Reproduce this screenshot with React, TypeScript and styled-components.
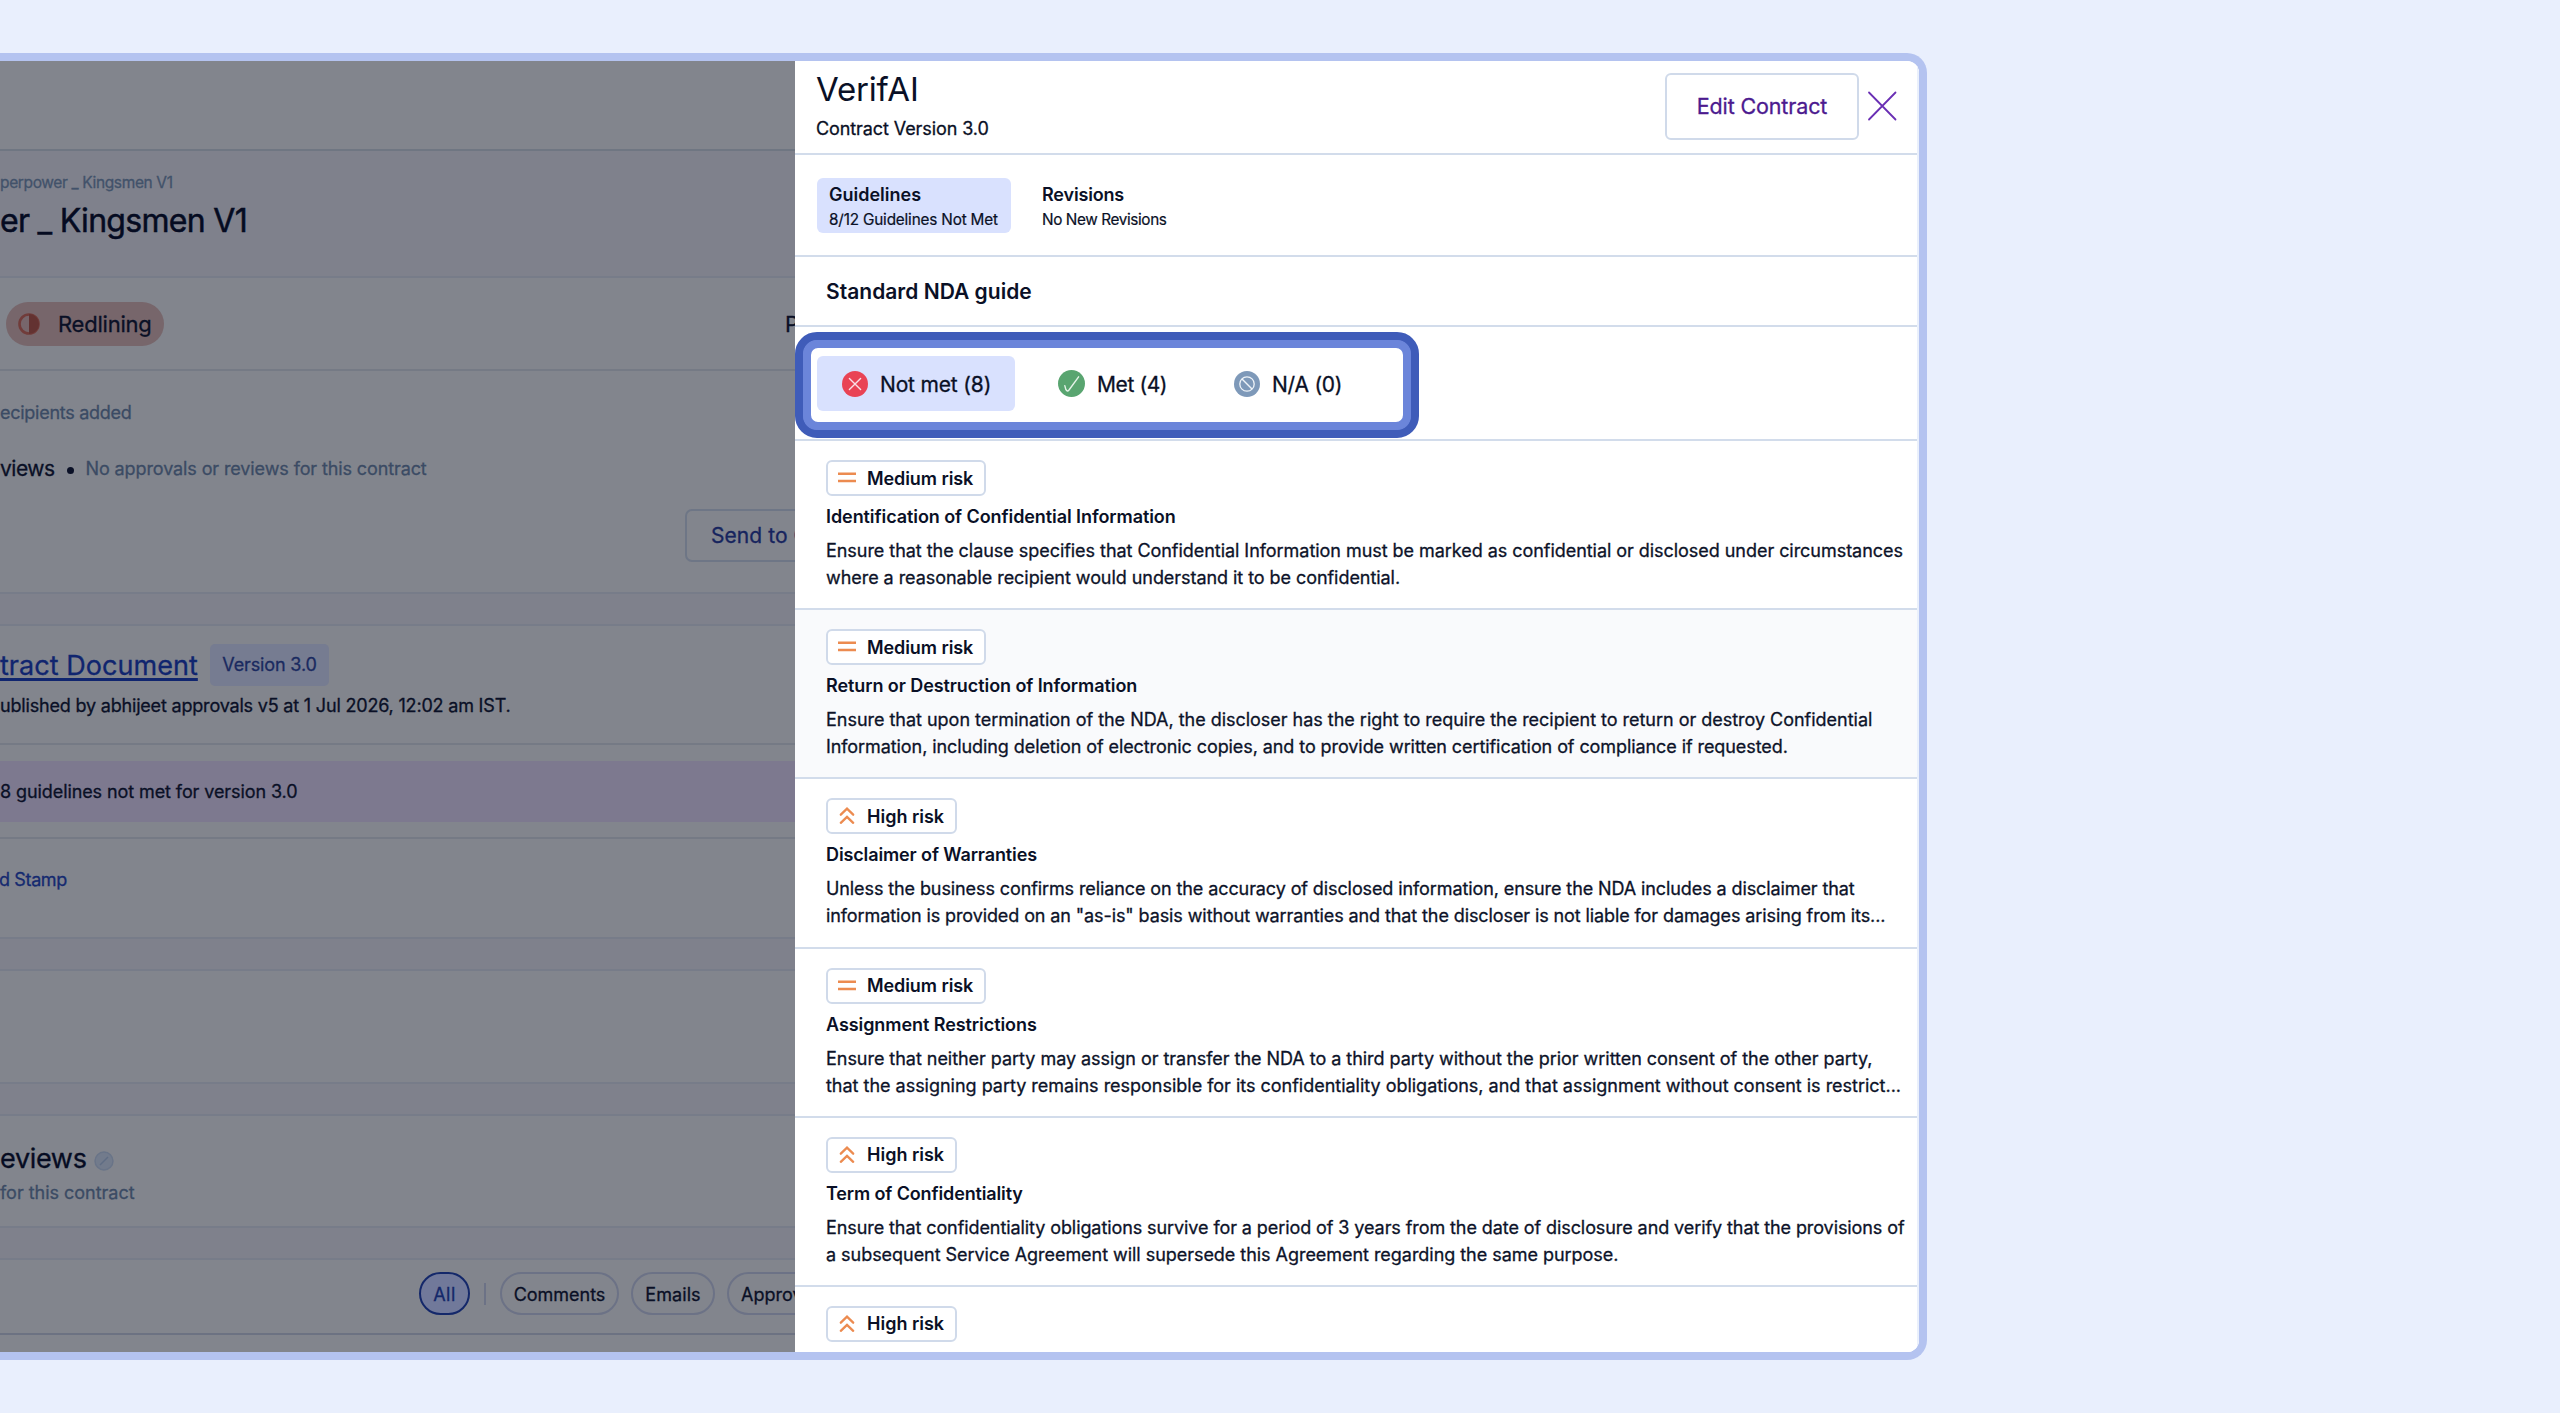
import React from "react";
import styled, { createGlobalStyle, css } from "styled-components";

const GlobalStyle = createGlobalStyle`
  *, *::before, *::after { box-sizing: border-box; }
  body {
    margin: 0;
    background: #e9effd;
    font-family: Inter, "Liberation Sans", sans-serif;
    font-weight: 400;
    color: #0a1026;
    overflow: hidden;
  }
`;

type Spacing = { $ls?: number };
const tracking = css<Spacing>`
  letter-spacing: ${(p) => p.$ls ?? 0}px;
  white-space: nowrap;
`;

/* Thickens regular text to a grade between 400 and 500. */
const grade = css`-webkit-text-stroke: 0.3px currentColor;`;

/* ---------- Frame ---------- */

const Page = styled.main`
  width: 2560px;
  height: 1413px;
  padding-top: 53px;
  background: #e9effd;
`;

const Frame = styled.div`
  display: flex;
  width: 1927px;
  height: 1307px;
  border: 8px solid #b4c3f0;
  border-left: 0;
  border-radius: 0 20px 20px 0;
  overflow: hidden;
  background: #fff;
`;

/* ---------- Dimmed contract page ---------- */

const Dimmed = styled.section`
  flex: none;
  width: 795px;
  display: flex;
  flex-direction: column;
  overflow: hidden;
  background: #82858d;
  ${grade}
`;

const Block = styled.div<{ $h: number; $band?: boolean; $line?: string; $pad?: number }>`
  flex: none;
  display: flex;
  flex-direction: column;
  align-items: flex-start;
  height: ${(p) => p.$h}px;
  padding-top: ${(p) => p.$pad ?? 0}px;
  background: ${(p) => (p.$band ? "#7f818c" : "#82858d")};
  border-bottom: 2px solid ${(p) => p.$line ?? "#777c89"};
`;

const Breadcrumb = styled.div<Spacing>`
  font-size: 15.5px;
  line-height: 24px;
  color: #42526a;
  ${tracking}
`;

const ContractTitle = styled.h1<Spacing>`
  margin: 6px 0 0;
  font-size: 32px;
  line-height: 40px;
  font-weight: 400;
  color: #050b21;
  -webkit-text-stroke: 0.5px currentColor;
  ${tracking}
`;

const StatusRow = styled.div`
  flex: none;
  display: flex;
  align-items: center;
  height: 93px;
  padding-left: 6px;
  border-bottom: 2px solid #757a85;
`;

const StatusPill = styled.div`
  flex: none;
  display: flex;
  align-items: center;
  width: 158px;
  height: 44px;
  padding-left: 12px;
  border-radius: 22px;
  background: #77666b;
`;

const StatusText = styled.span<Spacing>`
  margin-left: 18px;
  font-size: 22px;
  line-height: 30px;
  ${tracking}
`;

const Clipped = styled.span`
  margin-left: 621px;
  font-size: 22px;
  line-height: 30px;
  white-space: nowrap;
`;

const Muted = styled.p<Spacing>`
  margin: 0;
  font-size: 18px;
  line-height: 28px;
  color: #3b4b64;
  ${tracking}
`;

const Body = styled.p<Spacing>`
  margin: 0;
  font-size: 18px;
  line-height: 28px;
  ${tracking}
`;

const PublishedNote = styled(Body)`
  margin-top: 6px;
`;

const ReviewLine = styled.div`
  display: flex;
  align-items: center;
  height: 30px;
  margin: 27px 0 25px;
`;

const ReviewLabel = styled.span<Spacing>`
  font-size: 21px;
  line-height: 30px;
  ${tracking}
`;

const Bullet = styled.i`
  width: 7px;
  height: 7px;
  margin: 2px 12px 0 12px;
  border-radius: 50%;
  background: #0a1026;
`;

const SendButton = styled.button<Spacing>`
  align-self: flex-start;
  width: 200px;
  height: 53px;
  margin-left: 685px;
  padding: 0 0 0 24px;
  border: 2px solid #6e7686;
  border-radius: 7px;
  background: transparent;
  font: 400 21px/30px Inter, sans-serif;
  text-align: left;
  color: #16245e;
  ${tracking}
`;

const DocRow = styled.div`
  display: flex;
  align-items: center;
  height: 42px;
`;

const DocLink = styled.a<Spacing>`
  width: 198px;
  font-size: 27px;
  line-height: 33px;
  color: #10256f;
  text-decoration: underline;
  text-decoration-thickness: 2.5px;
  text-underline-offset: 3px;
  text-decoration-skip-ink: none;
  ${tracking}
`;

const VersionBadge = styled.span<Spacing>`
  width: 119px;
  height: 42px;
  margin-left: 12px;
  border-radius: 5px;
  background: #767c91;
  font-size: 18px;
  line-height: 41px;
  text-align: center;
  color: #1a2a60;
  ${tracking}
`;

const Notice = styled.div`
  flex: none;
  display: flex;
  align-items: center;
  height: 61px;
  margin-top: 16px;
  background: #7d798f;
`;

const StampBlock = styled.div`
  flex: none;
  display: flex;
  align-items: center;
  height: 102px;
  margin-top: 15px;
  padding-bottom: 16px;
  border-top: 2px solid #757a85;
  border-bottom: 2px solid #777c89;
`;

const StampLink = styled.a<Spacing>`
  margin-left: -1px;
  font-size: 18px;
  line-height: 28px;
  color: #152a70;
  ${tracking}
`;

const HeadingRow = styled.div`
  display: flex;
  align-items: center;
  gap: 7px;
  height: 36px;
  svg { margin-top: 3px; }
`;

const SectionHeading = styled.h2<Spacing>`
  margin: 0;
  font-size: 27px;
  line-height: 36px;
  font-weight: 400;
  color: #060c22;
  ${tracking}
`;

const SectionNote = styled(Muted)`
  margin-top: 2px;
`;

const ChipRow = styled.div`
  flex: none;
  display: flex;
  align-items: center;
  height: 75px;
  padding: 0 0 6px 419px;
  border-bottom: 2px solid #6c7282;
`;

const Chip = styled.span<Spacing & { $w: number; $active?: boolean; $gap?: number }>`
  flex: none;
  width: ${(p) => p.$w}px;
  height: 43px;
  margin-right: ${(p) => p.$gap ?? 12}px;
  border: 2px solid ${(p) => (p.$active ? "#14286a" : "#6c7286")};
  border-radius: 22px;
  background: ${(p) => (p.$active ? "#71799a" : "transparent")};
  font-size: 18px;
  line-height: 41px;
  text-align: center;
  color: ${(p) => (p.$active ? "#14286a" : "#0a1026")};
  ${tracking}
`;

const OpenChip = styled(Chip)`
  padding-left: 12px;
  text-align: left;
`;

const ChipDivider = styled.i`
  flex: none;
  width: 2px;
  height: 22px;
  margin-right: 14px;
  background: #6c7286;
`;

/* ---------- VerifAI panel ---------- */

const Panel = styled.section`
  flex: 1;
  min-width: 0;
  display: flex;
  flex-direction: column;
  overflow: hidden;
  border-right: 2px solid #eaf0fc;
  background: #fff;
`;

const rule = css`border-bottom: 2px solid #d2dceb;`;

const PanelHeader = styled.header`
  flex: none;
  display: flex;
  height: 94px;
  padding: 8px 20px 0 21px;
  ${rule}
`;

const TitleGroup = styled.div`
  flex: 1;
  display: flex;
  flex-direction: column;
`;

const PanelTitle = styled.h2<Spacing>`
  margin: 0;
  font-size: 33px;
  line-height: 41px;
  font-weight: 400;
  ${tracking}
`;

const PanelSub = styled.p<Spacing>`
  margin: 5px 0 0;
  font-size: 18px;
  line-height: 28px;
  ${grade}
  ${tracking}
`;

const EditButton = styled.button<Spacing>`
  width: 194px;
  height: 67px;
  margin: 4px 8px 0 0;
  padding: 0 0 2px;
  border: 2px solid #d0daea;
  border-radius: 6px;
  background: #fff;
  font: 400 21.5px/30px Inter, sans-serif;
  color: #4c1a8f;
  ${grade}
  ${tracking}
`;

const CloseButton = styled.button`
  display: flex;
  width: 30px;
  height: 30px;
  margin-top: 22px;
  padding: 0;
  border: 0;
  background: none;
`;

const Tabs = styled.nav`
  flex: none;
  display: flex;
  gap: 19px;
  height: 102px;
  padding: 23px 0 0 22px;
  ${rule}
`;

const Tab = styled.div<{ $active?: boolean }>`
  width: 194px;
  height: 55px;
  padding: 4px 0 0 12px;
  border-radius: 6px;
  background: ${(p) => (p.$active ? "#d9e1fe" : "transparent")};
`;

const TabName = styled.div<Spacing>`
  font-size: 18px;
  line-height: 26px;
  font-weight: 600;
  ${tracking}
`;

const TabInfo = styled.div<Spacing>`
  font-size: 15.3px;
  line-height: 23px;
  -webkit-text-stroke: 0.2px currentColor;
  ${tracking}
`;

const GuideTitle = styled.h3<Spacing>`
  flex: none;
  height: 70px;
  margin: 0;
  padding: 0 0 0 31px;
  font-size: 21px;
  line-height: 70px;
  font-weight: 600;
  ${rule}
  ${tracking}
`;

const FilterRow = styled.div`
  flex: none;
  height: 114px;
  padding-top: 5px;
  ${rule}
`;

const RingOuter = styled.div`
  width: 624px;
  height: 106px;
  border: 8px solid #3f5cb9;
  border-radius: 22px;
  background: #6b85da;
`;

const RingInner = styled.div`
  display: flex;
  height: 90px;
  padding: 8px 6px 0;
  border: 8px solid #6b85da;
  border-radius: 15px;
  background: #fff;
`;

const Filter = styled.button<Spacing & { $w: number; $pl: number; $active?: boolean }>`
  display: flex;
  align-items: center;
  width: ${(p) => p.$w}px;
  height: 55px;
  padding: 0 0 0 ${(p) => p.$pl}px;
  border: 0;
  border-radius: 6px;
  background: ${(p) => (p.$active ? "#d9e1fe" : "transparent")};
  font: 400 21px/30px Inter, sans-serif;
  color: #0a1026;
  ${grade}
  ${tracking}
  svg { flex: none; }
`;

const FilterLabel = styled.span`
  padding: 2px 0 0 12px;
`;

const Card = styled.article<{ $tinted?: boolean }>`
  flex: none;
  height: 169.2px;
  padding: 19px 0 0 31px;
  background: ${(p) => (p.$tinted ? "#f9fafc" : "#fff")};
  ${rule}
`;

const RiskBadge = styled.div<Spacing & { $high: boolean }>`
  display: flex;
  align-items: center;
  gap: 10px;
  width: ${(p) => (p.$high ? 131 : 160)}px;
  height: 36px;
  padding-left: 9px;
  border: 2px solid #d0daea;
  border-radius: 6px;
  background: #fff;
  font-size: 18px;
  font-weight: 600;
  ${tracking}
  svg { flex: none; }
`;

const CardTitle = styled.h4<Spacing>`
  margin: 7px 0 0;
  font-size: 18px;
  line-height: 28px;
  font-weight: 600;
  ${tracking}
`;

const CardText = styled.p`
  margin: 6px 0 0;
  font-size: 18px;
  line-height: 27px;
  color: #0d1329;
  ${grade}
`;

const Line = styled.span<Spacing>`
  display: block;
  ${tracking}
`;

/* ---------- Icons ---------- */

const HalfCircle = () => (
  <svg width="22" height="22" viewBox="0 0 22 22">
    <circle cx="11" cy="11" r="9.5" fill="none" stroke="#713c3a" strokeWidth="2.6" />
    <path d="M11 1a10 10 0 0 1 0 20z" fill="#633231" />
  </svg>
);

const PendingIcon = () => (
  <svg width="20" height="20" viewBox="0 0 20 20">
    <circle cx="10" cy="10" r="9" fill="#727b8c" stroke="#697488" strokeWidth="1.4" />
    <path d="M6 14 14 6" stroke="#5f6d83" strokeWidth="1.4" />
  </svg>
);

const CloseIcon = () => (
  <svg width="30" height="30" viewBox="0 0 30 30">
    <path d="M2 1.5 28.5 28.5M28.5 1.5 2 28.5" stroke="#6a2fb4" strokeWidth="1.8" strokeLinecap="round" />
  </svg>
);

const NotMetIcon = () => (
  <svg width="26" height="26" viewBox="0 0 26 26">
    <circle cx="13" cy="13" r="13" fill="#e94355" />
    <path d="M7.4 7.4 18.6 18.6M18.6 7.4 7.4 18.6" stroke="#f9dfe6" strokeWidth="1.4" strokeLinecap="round" />
  </svg>
);

const MetIcon = () => (
  <svg width="27" height="27" viewBox="0 0 27 27">
    <circle cx="13.5" cy="13.5" r="13.5" fill="#59a570" />
    <path d="M6.8 15.6 7.8 19.4Q9.2 22.2 11 20L20.6 6.8" fill="none" stroke="#e4f2e8" strokeWidth="1.4" strokeLinecap="round" strokeLinejoin="round" />
  </svg>
);

const NaIcon = () => (
  <svg width="26" height="26" viewBox="0 0 26 26">
    <circle cx="13" cy="13" r="13" fill="#7e99b9" />
    <circle cx="13" cy="13" r="7.2" fill="none" stroke="#eef3f8" strokeWidth="1.3" />
    <path d="M8 8 18 18" stroke="#eef3f8" strokeWidth="1.4" />
  </svg>
);

const MediumIcon = () => (
  <svg width="20" height="20" viewBox="0 0 20 20">
    <path d="M1 5.8H19M1 13H19" stroke="#ec8b50" strokeWidth="2.4" />
  </svg>
);

const HighIcon = () => (
  <svg width="20" height="20" viewBox="0 0 20 20">
    <path d="M3.8 8.7 10 2.7 16.2 8.7M3.8 16.8 10 10.8 16.2 16.8" fill="none" stroke="#ec8b50" strokeWidth="2.3" strokeLinecap="round" />
  </svg>
);

/* ---------- Data ---------- */

type Guideline = {
  high?: boolean;
  tinted?: boolean;
  title: string;
  ls: number;
  lines: [string, number][];
};

const guidelines: Guideline[] = [
  {
    title: "Identification of Confidential Information",
    ls: -0.075,
    lines: [
      ["Ensure that the clause specifies that Confidential Information must be marked as confidential or disclosed under circumstances", -0.044],
      ["where a reasonable recipient would understand it to be confidential.", -0.055],
    ],
  },
  {
    tinted: true,
    title: "Return or Destruction of Information",
    ls: -0.08,
    lines: [
      ["Ensure that upon termination of the NDA, the discloser has the right to require the recipient to return or destroy Confidential", -0.02],
      ["Information, including deletion of electronic copies, and to provide written certification of compliance if requested.", -0.08],
    ],
  },
  {
    high: true,
    title: "Disclaimer of Warranties",
    ls: -0.12,
    lines: [
      ["Unless the business confirms reliance on the accuracy of disclosed information, ensure the NDA includes a disclaimer that", -0.1],
      ['information is provided on an "as-is" basis without warranties and that the discloser is not liable for damages arising from its...', -0.1],
    ],
  },
  {
    title: "Assignment Restrictions",
    ls: -0.07,
    lines: [
      ["Ensure that neither party may assign or transfer the NDA to a third party without the prior written consent of the other party,", -0.037],
      ["that the assigning party remains responsible for its confidentiality obligations, and that assignment without consent is restrict...", -0.014],
    ],
  },
  {
    high: true,
    title: "Term of Confidentiality",
    ls: -0.13,
    lines: [
      ["Ensure that confidentiality obligations survive for a period of 3 years from the date of disclosure and verify that the provisions of", -0.085],
      ["a subsequent Service Agreement will supersede this Agreement regarding the same purpose.", -0.04],
    ],
  },
  { high: true, title: "", ls: 0, lines: [] },
];

const GuidelineCard = ({ high = false, tinted, title, ls, lines }: Guideline) => (
  <Card $tinted={tinted}>
    <RiskBadge $high={high} $ls={high ? 0 : -0.08}>
      {high ? <HighIcon /> : <MediumIcon />}
      {high ? "High risk" : "Medium risk"}
    </RiskBadge>
    {title && <CardTitle $ls={ls}>{title}</CardTitle>}
    <CardText>
      {lines.map(([text, s]) => (
        <Line key={text} $ls={s}>{text}</Line>
      ))}
    </CardText>
  </Card>
);

const ContractPage = () => (
  <Dimmed>
    <Block $h={90} $line="#6f7682" />
    <Block $h={127} $band $pad={20}>
      <Breadcrumb $ls={-0.36}>perpower _ Kingsmen V1</Breadcrumb>
      <ContractTitle $ls={-0.7}>er _ Kingsmen V1</ContractTitle>
    </Block>
    <StatusRow>
      <StatusPill>
        <HalfCircle />
        <StatusText $ls={-0.22}>Redlining</StatusText>
      </StatusPill>
      <Clipped>P</Clipped>
    </StatusRow>
    <Block $h={223} $pad={28}>
      <Muted $ls={-0.27}>ecipients added</Muted>
      <ReviewLine>
        <ReviewLabel $ls={-0.5}>views</ReviewLabel>
        <Bullet />
        <Muted $ls={-0.11}>No approvals or reviews for this contract</Muted>
      </ReviewLine>
      <SendButton $ls={0.06}>Send to C</SendButton>
    </Block>
    <Block $h={32} $band />
    <Block $h={119} $pad={18} $line="#757a85">
      <DocRow>
        <DocLink $ls={0.04}>tract Document</DocLink>
        <VersionBadge $ls={-0.14}>Version 3.0</VersionBadge>
      </DocRow>
      <PublishedNote $ls={-0.185}>ublished by abhijeet approvals v5 at 1 Jul 2026, 12:02 am IST.</PublishedNote>
    </Block>
    <Notice>
      <Body $ls={-0.09}>8 guidelines not met for version 3.0</Body>
    </Notice>
    <StampBlock>
      <StampLink $ls={-0.37}>d Stamp</StampLink>
    </StampBlock>
    <Block $h={32} $band />
    <Block $h={113} />
    <Block $h={32} $band />
    <Block $h={112} $pad={25}>
      <HeadingRow>
        <SectionHeading $ls={-0.33}>eviews</SectionHeading>
        <PendingIcon />
      </HeadingRow>
      <SectionNote $ls={-0.02}>for this contract</SectionNote>
    </Block>
    <Block $h={32} $band />
    <ChipRow>
      <Chip $w={51} $gap={14} $active $ls={0.5}>All</Chip>
      <ChipDivider />
      <Chip $w={119} $ls={-0.03}>Comments</Chip>
      <Chip $w={84} $ls={0.08}>Emails</Chip>
      <OpenChip $w={124} $ls={0}>Approv</OpenChip>
    </ChipRow>
  </Dimmed>
);

const VerifPanel = () => (
  <Panel>
    <PanelHeader>
      <TitleGroup>
        <PanelTitle $ls={-0.2}>VerifAI</PanelTitle>
        <PanelSub $ls={-0.09}>Contract Version 3.0</PanelSub>
      </TitleGroup>
      <EditButton $ls={-0.14}>Edit Contract</EditButton>
      <CloseButton aria-label="Close"><CloseIcon /></CloseButton>
    </PanelHeader>
    <Tabs>
      <Tab $active>
        <TabName $ls={0}>Guidelines</TabName>
        <TabInfo $ls={-0.17}>8/12 Guidelines Not Met</TabInfo>
      </Tab>
      <Tab>
        <TabName $ls={-0.17}>Revisions</TabName>
        <TabInfo $ls={-0.38}>No New Revisions</TabInfo>
      </Tab>
    </Tabs>
    <GuideTitle $ls={0.02}>Standard NDA guide</GuideTitle>
    <FilterRow>
      <RingOuter>
        <RingInner>
          <Filter $w={198} $pl={25} $active $ls={-0.16}><NotMetIcon /><FilterLabel>Not met (8)</FilterLabel></Filter>
          <Filter $w={176} $pl={43} $ls={-0.4}><MetIcon /><FilterLabel>Met (4)</FilterLabel></Filter>
          <Filter $w={176} $pl={43} $ls={-0.22}><NaIcon /><FilterLabel>N/A (0)</FilterLabel></Filter>
        </RingInner>
      </RingOuter>
    </FilterRow>
    {guidelines.map((g, i) => (
      <GuidelineCard key={i} {...g} />
    ))}
  </Panel>
);

export default function App() {
  return (
    <>
      <GlobalStyle />
      <Page>
        <Frame>
          <ContractPage />
          <VerifPanel />
        </Frame>
      </Page>
    </>
  );
}
